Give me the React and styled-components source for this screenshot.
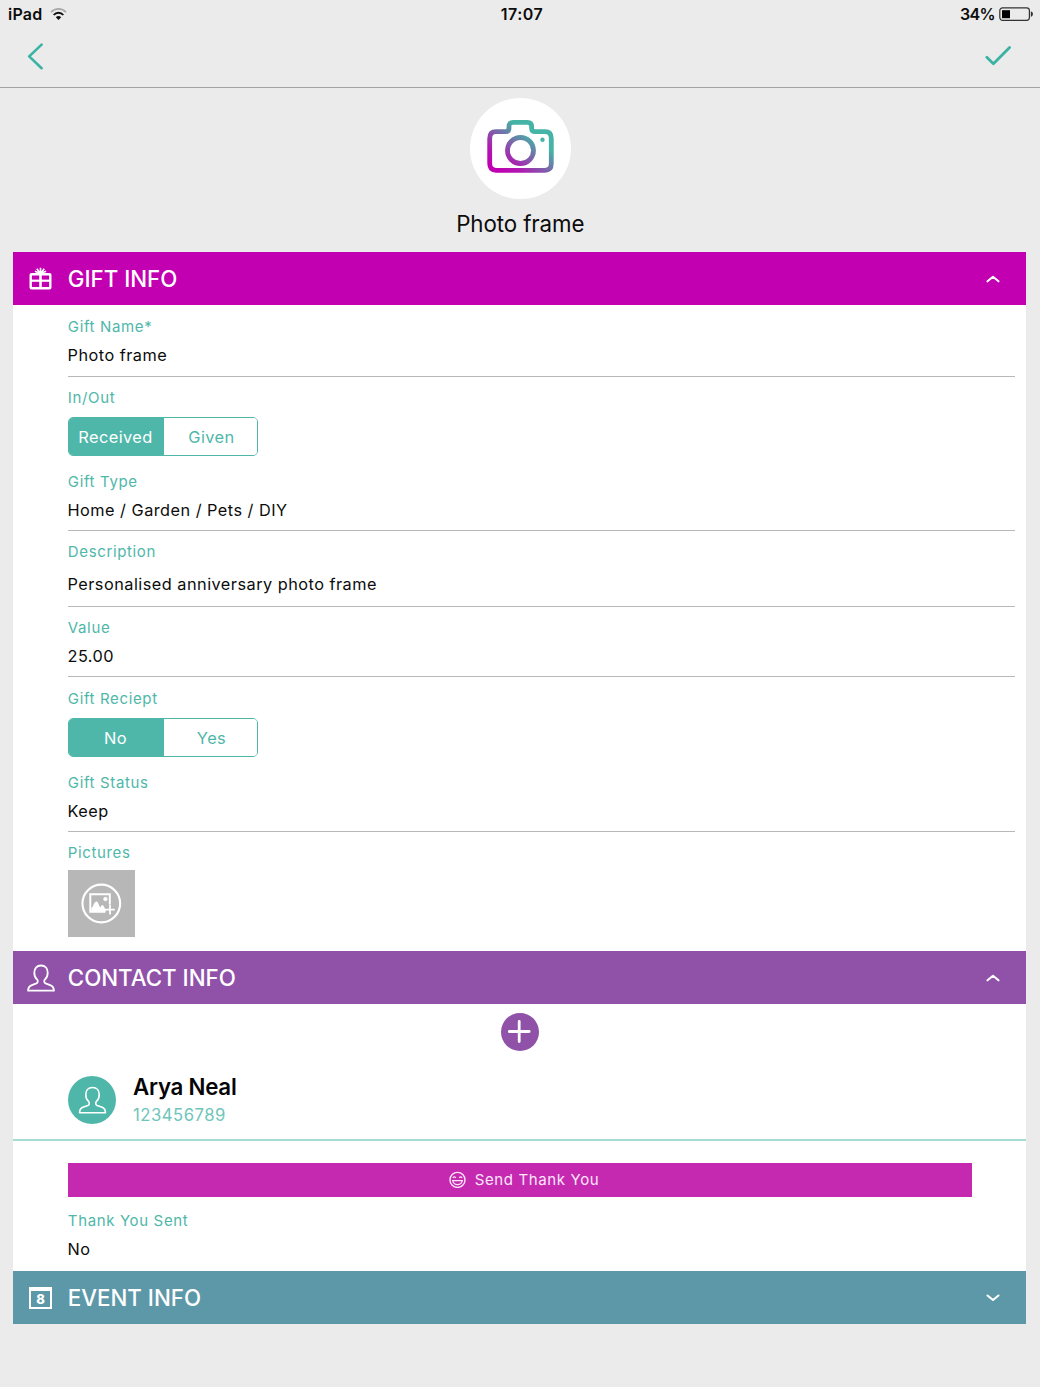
import React from "react";
import styled, { createGlobalStyle } from "styled-components";

const teal = "#4fb7a9";
const GlobalStyle = createGlobalStyle`
  *, *::before, *::after { box-sizing: border-box; }
  body {
    margin: 0;
    background: #ebebeb;
    font-family: Inter, "Liberation Sans", sans-serif;
    color: #0c0c0c;
  }
  button { font: inherit; border: 0; padding: 0; background: none; }
  svg { display: block; flex: none; }
`;

const Page = styled.main`
  width: 1040px;
  height: 1387px;
  overflow: hidden;
  display: flex;
  flex-direction: column;
`;

const StatusBar = styled.div`
  height: 29px;
  padding: 0 7px 0 8px;
  display: grid;
  grid-template-columns: 1fr auto 1fr;
  align-items: center;
  font-size: 16px;
  font-weight: 600;
  line-height: 27px;
  padding-bottom: 1px;
`;
const StatusSide = styled.div`
  display: flex;
  align-items: center;
  gap: ${(p) => p.$gap}px;
  justify-content: ${(p) => (p.$end ? "flex-end" : "flex-start")};
  letter-spacing: ${(p) => (p.$end ? "-0.6px" : "0.2px")};
`;
const Time = styled.time`
  padding-left: 3px;
  letter-spacing: 0.5px;
`;

const NavBar = styled.nav`
  height: 59px;
  padding: 0 28px 4px 26px;
  display: flex;
  align-items: center;
  justify-content: space-between;
  border-bottom: 1px solid #a3a3a3;
`;

const Hero = styled.header`
  height: 164px;
  padding-top: 9.5px;
  display: flex;
  flex-direction: column;
  align-items: center;
`;
const HeroCircle = styled.div`
  width: 101px;
  height: 101px;
  margin-left: 1px;
  padding-bottom: 3px;
  border-radius: 50%;
  background: #fff;
  display: grid;
  place-items: center;
`;
const HeroTitle = styled.h1`
  margin: 10.5px 0 0;
  font-size: 22.3px;
  line-height: 30px;
  font-weight: 400;
  letter-spacing: -0.1px;
  padding-left: 0.6px;
`;

const Sections = styled.div`
  margin: 0 14px 0 13px;
  background: #fff;
`;
const SectionBar = styled.div`
  height: 53px;
  padding: 0 26.5px 0 13.5px;
  display: flex;
  align-items: center;
  background: ${(p) => p.$color};
  color: #fff;
`;
const BarIcon = styled.span`
  width: 41.300px;
  display: flex;
  padding-left: ${(p) => p.$inset || 0}px;
`;
const BarTitle = styled.h2`
  margin: 0;
  flex: 1;
  font-size: 22.3px;
  line-height: 28px;
  font-weight: 500;
  padding-top: 1px;
`;

const Fields = styled.div`
  height: ${(p) => p.$h}px;
  padding: ${(p) => p.$top}px 11px 0 55px;
`;
const Field = styled.div`
  height: ${(p) => p.$h}px;
  border-bottom: ${(p) => (p.$line ? "1px solid #b8b8b8" : "0")};
  margin-bottom: ${(p) => p.$after}px;
`;
const Label = styled.div`
  height: 20px;
  padding-top: 1px;
  font-size: 15px;
  line-height: 20px;
  letter-spacing: 0.64px;
  margin-left: -0.2px;
  color: ${teal};
`;
const Value = styled.div`
  margin: ${(p) => p.$gap || 9}px 0 0 -0.5px;
  font-size: 16.3px;
  line-height: 20px;
  letter-spacing: 0.48px;
`;
const Segments = styled.div`
  width: 190px;
  height: 39px;
  margin-top: 10px;
  display: grid;
  grid-template-columns: 95px 1fr;
  border: 1.5px solid ${teal};
  border-radius: 5px;
  overflow: hidden;
`;
const Segment = styled.button`
  background: ${(p) => (p.$on ? teal : "#fff")};
  color: ${(p) => (p.$on ? "#fff" : teal)};
  font-size: 16.4px;
  letter-spacing: 0.4px;
  padding: ${(p) => (p.$on ? "0 2px 0 0" : "0 0 0 2px")};
`;
const PictureButton = styled.button`
  width: 67px;
  height: 67px;
  margin-top: 8px;
  background: #b7b7b7;
  display: grid;
  place-items: center;
`;

const AddRow = styled.div`
  height: 61px;
  padding-top: 9px;
  display: flex;
  justify-content: center;
`;
const AddButton = styled.button`
  width: 38px;
  height: 38px;
  border-radius: 50%;
  background: #9052a8;
  display: grid;
  place-items: center;
`;
const Contact = styled.div`
  height: 76px;
  padding: 0 0 4px 55px;
  display: flex;
  align-items: center;
  gap: 17.5px;
  border-bottom: 2px solid #a6dcd4;
`;
const Avatar = styled.div`
  width: 48px;
  height: 48px;
  border-radius: 50%;
  background: ${teal};
  display: grid;
  place-items: center;
`;
const ContactText = styled.div`
  margin-top: -2px;
`;
const ContactName = styled.div`
  font-size: 22.3px;
  line-height: 30px;
  font-weight: 600;
  letter-spacing: -0.25px;
  margin: -1px 0 0 -0.5px;
  color: #050505;
`;
const ContactPhone = styled.div`
  font-size: 16.7px;
  line-height: 22px;
  margin: 2px 0 0 -0.5px;
  letter-spacing: 0.5px;
  color: #6fc5b9;
`;
const ThankButton = styled.button`
  width: 904px;
  height: 34px;
  margin: 22px 0 0 55px;
  padding: 0 0 1px 8px;
  display: flex;
  align-items: center;
  justify-content: center;
  gap: 9px;
  background: #c429b0;
  color: #ffe6fb;
  font-size: 15px;
  letter-spacing: 0.62px;
`;

const Wifi = () => (
  <svg width="17" height="13" viewBox="0 0 17 13" fill="none">
    <path d="M1 4.2C5-.2 12-.2 16 4.2" stroke="#a9a9a9" strokeWidth="1.7" />
    <path d="M3.7 7C6.2 4 10.800 4 13.300 7" stroke="#111" strokeWidth="1.9" />
    <path d="M5.800 9.200C7.200 7.600 9.800 7.600 11.200 9.200L8.500 12Z" fill="#111" />
  </svg>
);
const Battery = () => (
  <svg width="34" height="15" viewBox="0 0 34 15">
    <rect x=".8" y=".8" width="29.600" height="12.600" rx="2.800" fill="none" stroke="#333" strokeWidth="1.200" />
    <rect x="3" y="3.200" width="8" height="8" fill="#000" />
    <path d="M31.800 4.300Q34 5 34 7.100T31.800 9.900Z" fill="#333" />
  </svg>
);
const Back = () => (
  <svg width="18" height="28" viewBox="0 0 18 28" fill="none">
    <path d="M15.600 2.600 3.200 14.400 15.600 26.200" stroke="#3bb3a3" strokeWidth="2.600" strokeLinecap="round" strokeLinejoin="round" />
  </svg>
);
const Tick = () => (
  <svg width="28" height="22" viewBox="0 0 28 22" fill="none">
    <path d="M2.800 12.200 9.400 18.800 25.600 2.400" stroke="#3bb3a3" strokeWidth="2.800" strokeLinecap="round" strokeLinejoin="round" />
  </svg>
);
const Camera = () => (
  <svg width="68" height="56" viewBox="0 0 68 56" fill="none">
    <defs>
      <linearGradient id="lens" gradientUnits="userSpaceOnUse" x1="12" y1="52" x2="42" y2="12">
        <stop offset="0" stopColor="#bf00b2" />
        <stop offset=".25" stopColor="#b018b0" />
        <stop offset=".95" stopColor="#45b3a5" />
      </linearGradient>
    </defs>
    <g stroke="url(#lens)" strokeWidth="4.800" strokeLinejoin="round">
      <path d="M9 12.700H18.500Q22 12.700 22 9V7.500Q22 3.300 26 3.300H40.500Q44.600 3.300 44.600 7.500V9Q44.600 12.700 48 12.700H58Q64.300 12.700 64.300 19.500V44.500Q64.300 51.300 58 51.300H9Q2.700 51.300 2.700 44.500V19.500Q2.700 12.700 9 12.700Z" />
      <circle cx="33.500" cy="31.500" r="13" />
    </g>
    <circle cx="55.500" cy="20.800" r="2.200" fill="#45b3a5" />
  </svg>
);
const Gift = () => (
  <svg width="23" height="23" viewBox="0 0 22 23" fill="none" stroke="#fff">
    <rect x="1.200" y="7.200" width="19.600" height="14" rx=".8" strokeWidth="2.400" />
    <path d="M1 13.700H21" strokeWidth="2.200" />
    <path d="M11 7V21" strokeWidth="2.600" />
    <path d="M11 6.500V.7M11 6.500 7.300 1.800M11 6.500 14.700 1.800M11 6.500 5.400 4.200M11 6.500 16.600 4.200" strokeWidth="1.600" />
  </svg>
);
const Person = ({ width = 28, height = 28, stroke = 1.8 }) => (
  <svg width={width} height={height} viewBox="0 0 28 28" fill="none">
    <path d="M14 1.500C9.600 1.500 7.300 4.600 7.300 8.500C7.300 11.500 8.300 14 10 15.400C11.200 16.500 11 18.700 9.400 19.400L4.300 21.300C2 22.200 1.100 23.800 1.100 26.700H26.900C26.900 23.800 26 22.200 23.700 21.300L18.600 19.400C17 18.700 16.800 16.500 18 15.400C19.700 14 20.700 11.500 20.700 8.500C20.700 4.600 18.400 1.500 14 1.500Z" stroke="#fff" strokeWidth={stroke} strokeLinejoin="round" />
  </svg>
);
const DateGlyph = styled.span`
  width: 23px;
  height: 22px;
  border: 2px solid #fff;
  border-top-width: 4px;
  display: grid;
  place-items: center;
  font-size: 13px;
  line-height: 16px;
  font-weight: 800;
`;
const Chevron = ({ down }) => (
  <svg width="14" height="8" viewBox="0 0 14 8" fill="none">
    <path d={down ? "M1.500 1.500 7 6 12.500 1.500" : "M1.500 6.300 7 1.800 12.500 6.300"} stroke="#fff" strokeWidth="2.100" strokeLinecap="round" strokeLinejoin="round" />
  </svg>
);
const AddPicture = () => (
  <svg width="41" height="41" viewBox="0 0 42 42" fill="none" stroke="#fff">
    <circle cx="20.800" cy="21" r="19.300" strokeWidth="2.200" />
    <path d="M29.500 22V11.500H9.500V29.500H25" strokeWidth="2" />
    <path d="M10.500 29V25.500C12.600 25.500 12.700 20 15.500 19C18 18.500 18 23.500 20 25C20.500 22.700 21.700 21.800 22.800 23C24.300 25 24.800 27 26 29Z" fill="#fff" stroke="none" />
    <circle cx="25" cy="16.400" r="1.900" fill="#fff" strokeWidth=".6" />
    <path d="M29.700 22.200V32.300M24.800 27.300H34.600" strokeWidth="1.800" />
  </svg>
);
const Plus = () => (
  <svg width="24" height="24" viewBox="0 0 24 24" fill="none">
    <path d="M11.200 1.500V21.500M1.200 11.500H21.200" stroke="#fff" strokeWidth="2.800" strokeLinecap="round" />
  </svg>
);
const Smile = () => (
  <svg width="17" height="17" viewBox="0 0 17 17" fill="none" stroke="#ffe6fb">
    <circle cx="8.500" cy="8.900" r="7.500" strokeWidth="1.400" />
    <path d="M3.800 6.900Q5.300 5 6.800 6.900M10.200 6.900Q11.700 5 13.200 6.900M3.600 9.700H13.400Q12.300 13.700 8.500 13.700T3.600 9.700Z" strokeWidth="1.200" />
  </svg>
);

function Toggle({ options, selected }) {
  return (
    <Segments>
      {options.map((o) => (
        <Segment key={o} $on={o === selected}>{o}</Segment>
      ))}
    </Segments>
  );
}

export default function App() {
  return (
    <Page>
      <GlobalStyle />
      <StatusBar>
        <StatusSide $gap={8}>iPad <Wifi /></StatusSide>
        <Time>17:07</Time>
        <StatusSide $end $gap={4}>34% <Battery /></StatusSide>
      </StatusBar>
      <NavBar>
        <Back />
        <Tick />
      </NavBar>
      <Hero>
        <HeroCircle><Camera /></HeroCircle>
        <HeroTitle>Photo frame</HeroTitle>
      </Hero>
      <Sections>
        <SectionBar $color="#c200b1">
          <BarIcon $inset={2}><Gift /></BarIcon>
          <BarTitle>GIFT INFO</BarTitle>
          <Chevron />
        </SectionBar>
        <Fields $h={646} $top={11}>
          <Field $h={61} $line $after={10}>
            <Label>Gift Name*</Label>
            <Value>Photo frame</Value>
          </Field>
          <Field $h={74} $after={10}>
            <Label>In/Out</Label>
            <Toggle options={["Received", "Given"]} selected="Received" />
          </Field>
          <Field $h={60} $line $after={10}>
            <Label>Gift Type</Label>
            <Value>Home / Garden / Pets / DIY</Value>
          </Field>
          <Field $h={66} $line $after={10}>
            <Label>Description</Label>
            <Value $gap={13.4}>Personalised anniversary photo frame</Value>
          </Field>
          <Field $h={60} $line $after={11}>
            <Label>Value</Label>
            <Value>25.00</Value>
          </Field>
          <Field $h={74} $after={10}>
            <Label>Gift Reciept</Label>
            <Toggle options={["No", "Yes"]} selected="No" />
          </Field>
          <Field $h={60} $line $after={10}>
            <Label>Gift Status</Label>
            <Value>Keep</Value>
          </Field>
          <Field $h={96} $after={0}>
            <Label>Pictures</Label>
            <PictureButton><AddPicture /></PictureButton>
          </Field>
        </Fields>
        <SectionBar $color="#9052a8">
          <BarIcon><Person /></BarIcon>
          <BarTitle>CONTACT INFO</BarTitle>
          <Chevron />
        </SectionBar>
        <AddRow>
          <AddButton><Plus /></AddButton>
        </AddRow>
        <Contact>
          <Avatar><Person width={29} height={28} stroke={1.6} /></Avatar>
          <ContactText>
            <ContactName>Arya Neal</ContactName>
            <ContactPhone>123456789</ContactPhone>
          </ContactText>
        </Contact>
        <ThankButton><Smile /> Send Thank You</ThankButton>
        <Fields $h={74} $top={13}>
          <Field $h={60} $after={0}>
            <Label>Thank You Sent</Label>
            <Value>No</Value>
          </Field>
        </Fields>
        <SectionBar $color="#5d98a8">
          <BarIcon $inset={2.5}><DateGlyph>8</DateGlyph></BarIcon>
          <BarTitle>EVENT INFO</BarTitle>
          <Chevron down />
        </SectionBar>
      </Sections>
    </Page>
  );
}
